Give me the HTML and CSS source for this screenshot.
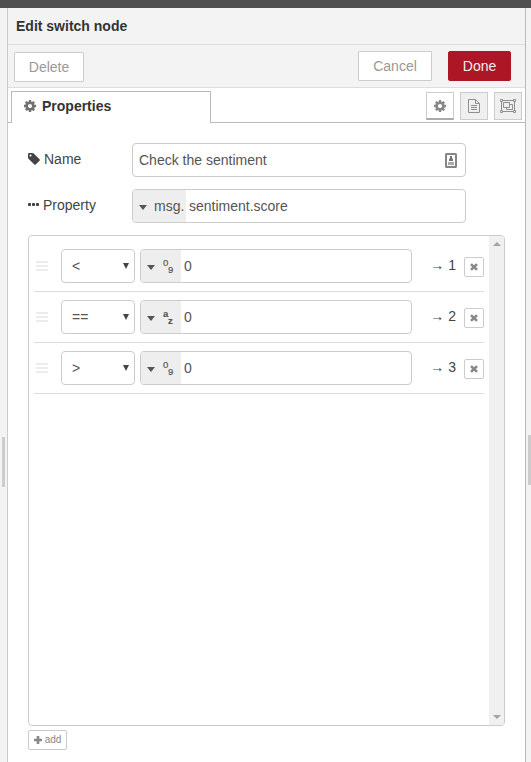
FILE: index.html
```html
<!DOCTYPE html>
<html lang="en">
<head>
<meta charset="utf-8">
<title>Edit switch node</title>
<link rel="stylesheet" href="styles.css">
</head>
<body>
<svg class="defs" width="0" height="0">
  <symbol id="cog" viewBox="128 128 1536 1536"><path d="M1152 896q0-106-75-181t-181-75-181 75-75 181 75 181 181 75 181-75 75-181zm512-109v222q0 12-8 23t-20 13l-185 28q-19 54-39 91 35 50 107 138 10 12 10 25t-9 23q-27 37-99 108t-94 71q-12 0-26-9l-138-108q-44 23-91 38-16 136-29 186-7 28-36 28h-222q-14 0-24.500-8.500t-11.500-21.500l-28-184q-49-16-90-37l-141 107q-10 9-25 9-14 0-25-11-126-114-165-168-7-10-7-23 0-12 8-23 15-21 51-66.500t54-70.500q-27-50-41-99l-183-27q-13-2-21-12.500t-8-23.500v-222q0-12 8-23t19-13l186-28q14-46 39-92-40-57-107-138-10-12-10-24 0-10 9-23 26-36 98.500-107.500t94.500-71.500q13 0 26 10l138 107q44-23 91-38 16-136 29-186 7-28 36-28h222q14 0 24.500 8.500t11.500 21.500l28 184q49 16 90 37l142-107q9-9 24-9 13 0 25 10 129 119 165 170 7 8 7 22 0 12-8 23-15 21-51 66.500t-54 70.500q26 50 41 98l183 28q13 2 21 12.500t8 23.500z"/></symbol>
  <symbol id="cross" viewBox="0 0 8 8"><path d="M1.900.3 4 2.200 6.100.3 7.900 2.100 5.900 4l2 1.900-1.800 1.800L4 5.800 1.900 7.700.1 5.900 2.100 4 .1 2.100z"/></symbol>
</svg>
<div class="topbar"></div>
<div class="workspace">
  <div class="gutter left"><span class="grip"></span></div>
  <main class="tray">
    <header class="title">Edit switch node</header>
    <div class="toolbar">
      <button class="btn delete">Delete</button>
      <button class="btn cancel">Cancel</button>
      <button class="btn done">Done</button>
    </div>
    <div class="tabs">
      <div class="tab"><svg class="cog"><use href="#cog"/></svg>Properties</div>
      <div class="modes">
        <span class="mode active"><svg class="cog"><use href="#cog"/></svg></span>
        <span class="mode"><svg width="12" height="14" viewBox="0 0 12 14" class="line"><path d="M.5.5h7l4 4v9H.5zM7.500.5v4h4M3 6.500h6M3 8.500h6M3 10.500h6"/></svg></span>
        <span class="mode"><svg width="16" height="14" viewBox="0 0 16 14" class="line"><path d="M2 1.500h12M2 12.500h12M1.500 2v10M14.500 2v10M.5.5h2v2h-2zM13.500.5h2v2h-2zM.5 11.500h2v2h-2zM13.500 11.500h2v2h-2zM3.500 3.500h6v5h-6zM9.500 5.500h3v5h-6v-2"/></svg></span>
      </div>
    </div>
    <section class="form">
      <div class="field">
        <label><svg class="tag" viewBox="128 128 1536 1536"><path d="M576 448q0-53-37.500-90.500t-90.500-37.500-90.500 37.500-37.500 90.500 37.500 90.500 90.500 37.500 90.500-37.500 37.500-90.500zm1067 576q0 53-37 90l-491 492q-39 37-91 37-53 0-90-37l-715-716q-38-37-64.500-101t-26.500-117v-416q0-52 38-90t90-38h416q53 0 117 26.500t102 64.500l715 714q37 39 37 91z"/></svg>Name</label>
        <div class="input name"><span>Check the sentiment</span>
          <svg width="12" height="15" viewBox="0 0 12 15"><rect x="1" y="1" width="10" height="13" rx=".5" fill="#fff" stroke="#858585" stroke-width="2"/><path fill="#777" d="M5 3h2v2l1 1v2H4V6l1-1z"/><path fill="#aaa" d="M3 9h6v3H3z"/></svg>
        </div>
      </div>
      <div class="field">
        <label><svg class="dots" viewBox="0 0 11 3"><rect width="3" height="3" rx=".7"/><rect x="4" width="3" height="3" rx=".7"/><rect x="8" width="3" height="3" rx=".7"/></svg>Property</label>
        <div class="input typed"><span class="prefix msg"><i class="caret"></i>msg.</span><span class="value">sentiment.score</span></div>
      </div>
      <div class="list">
        <div class="rules">
          <div class="rule">
            <span class="handle"><i></i><i></i><i></i></span>
            <span class="input select">&lt;<i class="arrow"></i></span>
            <span class="input typed"><span class="prefix"><i class="caret"></i><span class="type num"><b>0</b><b>9</b></span></span><span class="value">0</span></span>
            <span class="output">→ 1</span><span class="remove"><svg><use href="#cross"/></svg></span>
          </div>
          <div class="rule">
            <span class="handle"><i></i><i></i><i></i></span>
            <span class="input select">==<i class="arrow"></i></span>
            <span class="input typed"><span class="prefix"><i class="caret"></i><span class="type str"><b>a</b><b>z</b></span></span><span class="value">0</span></span>
            <span class="output">→ 2</span><span class="remove"><svg><use href="#cross"/></svg></span>
          </div>
          <div class="rule">
            <span class="handle"><i></i><i></i><i></i></span>
            <span class="input select">&gt;<i class="arrow"></i></span>
            <span class="input typed"><span class="prefix"><i class="caret"></i><span class="type num"><b>0</b><b>9</b></span></span><span class="value">0</span></span>
            <span class="output">→ 3</span><span class="remove"><svg><use href="#cross"/></svg></span>
          </div>
        </div>
        <div class="scroll"><i class="up"></i><i class="down"></i></div>
      </div>
      <button class="add"><svg viewBox="0 0 8 8"><path d="M2.700 0h2.600v2.700H8v2.600H5.300V8H2.700V5.300H0V2.700h2.700z"/></svg>add</button>
    </section>
  </main>
  <div class="gutter right"><span class="grip"></span></div>
</div>
</body>
</html>
```
FILE: styles.css
```css
* { box-sizing: border-box; }
body {
  margin: 0;
  height: 762px;
  overflow: hidden;
  display: flex;
  flex-direction: column;
  font: 14px/20px "Liberation Sans", Arial, sans-serif;
  color: #444;
  background: #fff;
}
svg { display: block; flex: none; fill: currentColor; }
.defs { position: absolute; }
button { font: inherit; padding: 0; }
.topbar { height: 8px; flex: none; background: #4f4f4f; }
.workspace { flex: 1; display: flex; min-height: 0; }
.gutter { flex: none; background: #f3f3f3; display: flex; align-items: flex-start; }
.left { width: 8px; border-right: 1px solid #ccc; padding: 429px 0 0 2px; }
.right { width: 6px; border-left: 1px solid #bbb; padding: 427px 0 0 2px; }
.grip { width: 3px; height: 50px; background: #ccc; }
.tray { flex: 1; min-width: 0; }

.title {
  height: 37px;
  padding: 8px;
  font-weight: bold;
  color: #333;
  background: #f3f3f3;
  border-bottom: 1px solid #ddd;
}
.toolbar {
  height: 43px;
  display: flex;
  align-items: flex-start;
  padding: 6px 14px 0 6px;
  background: #f3f3f3;
  border-bottom: 1px solid #ddd;
}
.btn {
  height: 30px;
  border: 1px solid #ccc;
  border-radius: 1px;
  background: #fff;
  color: #999;
}
.delete { width: 70px; margin-top: 1px; }
.cancel { width: 74px; margin-left: auto; }
.done { width: 63px; margin-left: 16px; background: #ad1625; border-color: #ad1625; color: #eee; border-radius: 2px; }

.tabs {
  height: 35px;
  display: flex;
  justify-content: space-between;
  align-items: flex-start;
  padding: 3px 3px 0;
  border-bottom: 1px solid #bbb;
}
.tab {
  width: 200px;
  height: 32px;
  display: flex;
  align-items: center;
  gap: 6px;
  padding: 0 0 3px 12px;
  border: 1px solid #bbb;
  border-bottom: 0;
  background: #fff;
  color: #333;
  font-weight: bold;
}
.cog { width: 12px; height: 12px; color: #707070; }
.modes { display: flex; gap: 6px; margin-top: 1px; }
.mode {
  width: 28px;
  height: 28px;
  display: flex;
  align-items: center;
  justify-content: center;
  border: 1px solid #ccc;
  background: #efefef;
  color: #8e8e8e;
}
.mode.active { background: #fff; border-bottom: 2px solid #aaa; }
.mode.active .cog { color: #888; margin-top: 1px; }
.line { fill: none; stroke: currentColor; }

.form { padding: 20px 20px 0; }
.field { display: flex; height: 34px; margin-bottom: 12px; }
label { width: 104px; display: flex; align-items: center; padding-bottom: 2px; }
.tag { width: 12px; height: 12px; margin: 0 4px 1px 0; }
.dots { width: 11px; height: 3px; margin: 0 4px 1px 0; }
.input {
  height: 34px;
  display: flex;
  align-items: center;
  border: 1px solid #ccc;
  border-radius: 4px;
  background: #fff;
  color: #555;
  overflow: hidden;
}
.field .input { width: 334px; }
.name { justify-content: space-between; padding: 0 8px 0 6px; }
.prefix {
  height: 100%;
  width: 40px;
  display: flex;
  align-items: center;
  padding-left: 6px;
  background: #eee;
}
.prefix.msg { width: 53px; gap: 7px; }
.caret {
  flex: none;
  margin-top: 2px;
  border: 4px solid transparent;
  border-top: 5px solid #555;
  border-bottom: 0;
}
.value { padding-left: 3px; }

.list {
  width: 477px;
  height: 491px;
  margin-top: 12px;
  display: flex;
  border: 1px solid #ccc;
  border-radius: 4px;
  overflow: hidden;
}
.rules { flex: 1; padding: 5px 5px 0; }
.rule {
  height: 51px;
  display: flex;
  align-items: center;
  border-bottom: 1px solid #ddd;
}
.handle { width: 12px; margin: 0 13px 0 2px; display: grid; gap: 2px; }
.handle i { height: 2px; background: #ececec; }
.select { width: 74px; margin-right: 5px; padding: 0 5px 0 10px; justify-content: space-between; }
.arrow { border: 3px solid transparent; border-top: 6px solid #444; border-bottom: 0; margin-bottom: 1px; }
.rule .typed { width: 272px; }
.type { display: grid; grid-template-columns: 5px 6px; margin: 1px 0 0 8px; font: 9.5px/10px "Liberation Sans", Arial, sans-serif; }
.type b { font-weight: normal; height: 10px; -webkit-text-stroke: .2px currentColor; }
.type b + b { margin-top: 7px; }
.str b { font-weight: bold; }
.output { margin-left: auto; margin-right: 8px; padding-bottom: 2px; white-space: pre; }
.remove {
  width: 20px;
  height: 20px;
  margin-top: 2px;
  display: flex;
  align-items: center;
  justify-content: center;
  border: 1px solid #ccc;
  border-radius: 2px;
  color: #888;
}
.remove svg { width: 8px; height: 8px; }
.scroll {
  width: 15px;
  display: flex;
  flex-direction: column;
  justify-content: space-between;
  align-items: center;
  padding: 6px 0;
  background: #f0f0f0;
}
.up, .down { border: 4px solid transparent; }
.up { border-top: 0; border-bottom-color: #a3a3a3; }
.down { border-bottom: 0; border-top-color: #a3a3a3; }
.add {
  width: 39px;
  height: 20px;
  margin-top: 4px;
  padding-bottom: 1px;
  display: flex;
  align-items: center;
  justify-content: center;
  gap: 3px;
  border: 1px solid #ccc;
  border-radius: 2px;
  background: #fff;
  color: #888;
  font-size: 10px;
}
.add svg { width: 8px; height: 8px; }
```
